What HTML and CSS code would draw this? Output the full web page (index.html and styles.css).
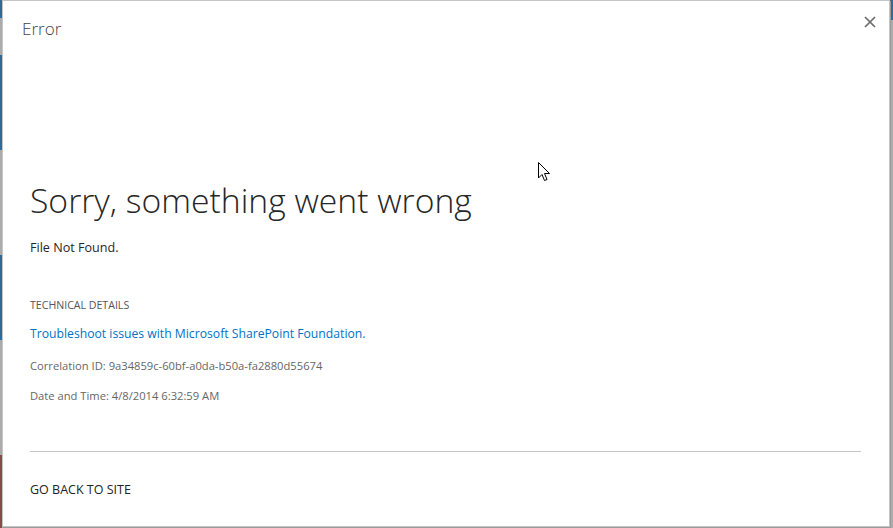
FILE: index.html
```html
<!DOCTYPE html>
<html lang="en">
<head>
<meta charset="utf-8">
<title>Error</title>
<link rel="stylesheet" href="styles.css">
</head>
<body>
<div class="dialog">
  <div class="titlebar">
    <span class="title">Error</span>
    <span class="close" aria-label="Close">
      <svg width="12" height="12" viewBox="0 0 12 12"><path d="M1 1 L11 11 M11 1 L1 11" stroke="#6b6b6b" stroke-width="1.7" fill="none"/></svg>
    </span>
  </div>
  <div class="content">
    <h1 class="heading">Sorry, something went wrong</h1>
    <p class="message">File Not Found.</p>
    <h2 class="tech">TECHNICAL DETAILS</h2>
    <a class="link" href="#">Troubleshoot issues with Microsoft SharePoint Foundation.</a>
    <p class="meta meta-first">Correlation ID: 9a34859c-60bf-a0da-b50a-fa2880d55674</p>
    <p class="meta">Date and Time: 4/8/2014 6:32:59 AM</p>
    <hr class="rule">
    <a class="back" href="#">GO BACK TO SITE</a>
  </div>
  <svg class="cursor" width="14" height="22" viewBox="0 0 14 22"><path d="M0.5 0.5 L0.5 16 L4 12.5 L6.5 18.5 L9 17.5 L6.5 11.5 L11.5 11.5 Z" fill="#fff" stroke="#000" stroke-width="1"/></svg>
</div>
</body>
</html>
```
FILE: styles.css
```css
html, body {
  margin: 0;
  padding: 0;
}
body {
  width: 893px;
  height: 528px;
  overflow: hidden;
  background-color: #ababab;
  background-image:
    linear-gradient(to bottom, #2d6b9c 0 18px, transparent 18px 55px, #2d6b9c 55px 150px, transparent 150px 255px, #2d6b9c 255px 340px, transparent 340px 455px, #8a4a4c 455px),
    linear-gradient(to bottom, #2d6b9c 0 20px, transparent 20px);
  background-size: 2px 528px, 3px 528px;
  background-position: 0 0, 890px 0;
  background-repeat: no-repeat;
  font-family: "Open Sans", "Liberation Sans", sans-serif;
}
.dialog {
  position: relative;
  box-sizing: border-box;
  margin-left: 2px;
  width: 888px;
  height: 527px;
  background: #fff;
  border: 1px solid #c4c4c4;
  box-shadow: 1px 1px 0 #9a9a9a;
}
.titlebar {
  display: flex;
  justify-content: space-between;
  align-items: flex-start;
  padding: 16px 13px 0 19px;
}
.title {
  font-size: 17.1px;
  line-height: 24px;
  color: #444;
  font-weight: 300;
}
.close {
  display: block;
  margin-top: -1px;
  width: 12px;
  height: 12px;
}
.close svg { display: block; }
.content {
  padding: 137px 28px 0 27px;
}
.heading {
  margin: 0;
  font-size: 33.7px;
  line-height: 44px;
  font-weight: 300;
  color: #262626;
}
.message {
  margin: 17px 0 0;
  font-size: 12.6px;
  line-height: 18px;
  color: #262626;
}
.tech {
  margin: 40px 0 0;
  font-size: 10.6px;
  line-height: 16px;
  font-weight: 400;
  color: #555;
}
.link {
  display: block;
  margin-top: 12px;
  font-size: 12.2px;
  line-height: 18px;
  color: #0072c6;
  text-decoration: none;
}
.meta {
  margin: 12px 0 0;
  font-size: 11.2px;
  line-height: 18px;
  color: #666;
}
.meta-first {
  margin-top: 14px;
}
.rule {
  margin: 46px 0 0;
  border: 0;
  height: 1px;
  background: #c6c6c6;
}
.back {
  display: block;
  margin-top: 29px;
  font-size: 12.5px;
  line-height: 18px;
  color: #222;
  text-decoration: none;
}
.cursor {
  position: absolute;
  left: 535px;
  top: 161px;
}
```
